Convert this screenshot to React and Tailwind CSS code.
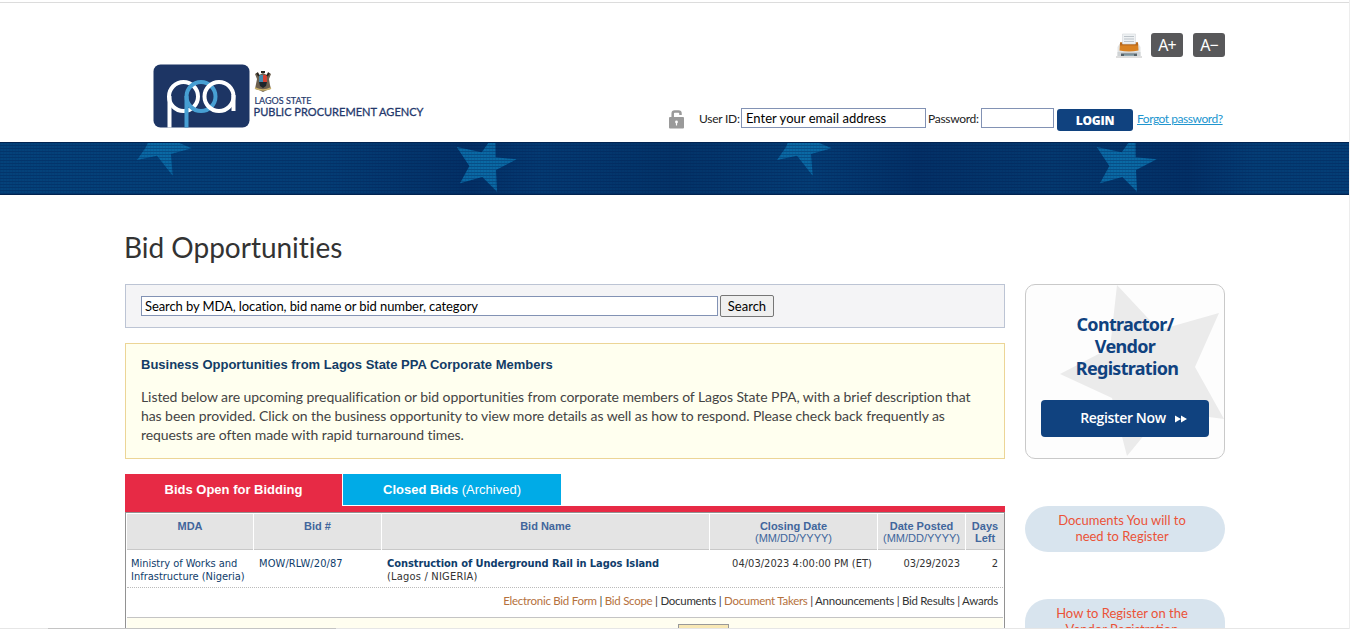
const LATO = "font-[Lato,'Noto_Sans',sans-serif]";

function Logo() {
  return (
    <svg className="block shrink-0 overflow-visible" width="275" height="66" viewBox="0 0 275 66">
      <defs>
        <clipPath id="tile"><rect x="0.5" y="0.5" width="96" height="63" rx="7" /></clipPath>
      </defs>
      <rect x="0.5" y="0.5" width="96" height="63" rx="7" fill="#1d3564" />
      <g clipPath="url(#tile)" fill="none" strokeWidth="4">
        <path d="M16.500 66V32" stroke="#fff" />
        <circle cx="30.500" cy="32.500" r="14.500" stroke="#fff" />
        <path d="M33.500 66V32" stroke="#479fd3" />
        <circle cx="48" cy="32.500" r="14.500" stroke="#479fd3" />
        <circle cx="66" cy="32.500" r="14.500" stroke="#fff" />
        <path d="M80.500 31V47" stroke="#fff" />
      </g>
      <g>
        <path d="M102 10l3-2 1 3 4-2 4 2 1-3 3 2-2 5 1 6 1 4-4 1-4 2-4-2-4-1 1-5 1-5z" fill="#6d604f" />
        <path d="M106 11h4v8h-4z" fill="#4689ae" />
        <path d="M110 11h4v8h-4z" fill="#d44233" />
        <path d="M106 18h8l-1 4-3 2-3-2z" fill="#1e252b" />
        <path d="M102 24q8 4 16 0" stroke="#cdb36b" strokeWidth="1.5" fill="none" />
        <path d="M104 9l2 3M116 9l-2 3M108 8h4" stroke="#28251f" strokeWidth="2" />
      </g>
      <text x="101.500" y="39.500" fill="#24386c" stroke="#24386c" strokeWidth="0.2" fontFamily="Lato, sans-serif" fontSize="9.500" textLength="57" lengthAdjust="spacingAndGlyphs">LAGOS STATE</text>
      <text x="100.500" y="52" fill="#24386c" stroke="#24386c" strokeWidth="0.3" fontFamily="Lato, sans-serif" fontSize="11.500" textLength="170" lengthAdjust="spacingAndGlyphs">PUBLIC PROCUREMENT AGENCY</text>
    </svg>
  );
}

function Printer() {
  return (
    <svg className="block" width="26" height="25" viewBox="0 0 26 25">
      <path d="M0 23.500h26v1H0z" fill="#bdbdbd" />
      <path d="M3.500 11h19l2 3v9h-23v-9z" fill="#e3e5e6" />
      <path d="M1.500 19h23v4h-23z" fill="#cfd3d5" />
      <path d="M4 9.500h18l.5 8q-9.500 2-19 0z" fill="#d98222" />
      <path d="M4 9.500h18v3H4z" fill="#b9691b" />
      <path d="M6.500 1h13v10h-13z" fill="#eef1f3" stroke="#d5d9dc" strokeWidth=".6" />
      <path d="M8 3.500h10M8 6h10M8 8.500h10" stroke="#bcc3c9" strokeWidth="1" />
      <path d="M5 20.500h16v2.500H5z" fill="#56636a" />
      <path d="M8 21.300h10v1.700H8z" fill="#8fa6b0" />
    </svg>
  );
}

function Lock() {
  return (
    <svg className="block" width="15" height="19" viewBox="0 0 15 19">
      <path d="M3.700 8V3.500Q3.700 1.500 5.700 1.500H9.500Q11.500 1.500 11.500 3.500V5" fill="none" stroke="#9a9a9a" strokeWidth="2.500" />
      <rect x="0" y="7" width="15" height="11.500" rx="1" fill="#9a9a9a" />
      <circle cx="7.500" cy="12" r="1.400" fill="#fff" />
      <path d="M6.900 12.500h1.200v3H6.900z" fill="#fff" />
    </svg>
  );
}

function Stars({ x }) {
  return (
    <g transform={`translate(${x} 0)`} fill="#0a69a4">
      <path d="M148 0L146 5 137 18 157 13.700 172.700 33.700 171 12 191.700 6.300 177 0z" />
      <path d="M456.700 5L481.700 10.300 489 0H495.500L495.700 15.300 516.700 17.300 496 28 497 49.700 482.300 35 460 41.300 469.300 24z" />
    </g>
  );
}

function Banner() {
  return (
    <svg className="block" width="1349" height="53" viewBox="0 0 1349 53">
      <defs>
        <linearGradient id="sea">
          <stop offset="0" stopColor="#04427a" />
          <stop offset=".24" stopColor="#043d75" />
          <stop offset=".35" stopColor="#033066" />
          <stop offset=".4" stopColor="#043a72" />
          <stop offset=".5" stopColor="#033368" />
          <stop offset=".6" stopColor="#043d75" />
          <stop offset=".68" stopColor="#033066" />
          <stop offset=".78" stopColor="#04396f" />
          <stop offset=".88" stopColor="#033066" />
          <stop offset=".93" stopColor="#043d75" />
          <stop offset="1" stopColor="#043e76" />
        </linearGradient>
        <pattern id="weave" width="3" height="3" patternUnits="userSpaceOnUse">
          <rect width="3" height="1" fill="#001c50" fillOpacity=".35" />
          <rect y="1" width="1" height="2" fill="#001c50" fillOpacity=".1" />
        </pattern>
      </defs>
      <rect width="1349" height="53" fill="url(#sea)" />
      <Stars x={0} />
      <Stars x={640} />
      <rect width="1349" height="53" fill="url(#weave)" />
      <path d="M0 .5H1349M0 52.500H1349" stroke="#012350" />
    </svg>
  );
}

function Header() {
  return (
    <header className="flex h-[142px] border-t border-white">
      <div className="pl-[153px] pt-[63px]"><Logo /></div>
      <div className="ml-auto flex w-[680px] flex-col pr-[124px]">
        <div className="mt-8 flex h-6 justify-end">
          <div className="mr-[9px]"><Printer /></div>
          <div className="mr-2.5 flex h-6 w-8 items-center justify-center rounded-[3px] bg-[#58585a] font-['Noto_Sans',sans-serif] text-base tracking-[-1px] text-white">A+</div>
          <div className="flex h-6 w-8 items-center justify-center rounded-[3px] bg-[#58585a] font-['Noto_Sans',sans-serif] text-base tracking-[-1px] text-white">A−</div>
        </div>
        <div className="mt-[50px] flex items-start whitespace-nowrap text-xs text-[#222]">
          <div className="mt-[3px] w-[30px] shrink-0"><Lock /></div>
          <div className="mt-1 w-[42px] shrink-0 tracking-[-0.25px]">User ID:</div>
          <div className="mt-px h-5 w-[185px] shrink-0 border border-[#8292b4] bg-white pl-1 text-[13px] leading-[19px] text-black"><span className="tracking-[0.03px]">Enter your email address</span></div>
          <div className="ml-[2px] mt-1 w-[53px] shrink-0 tracking-[-0.3px]">Password:</div>
          <div className="mt-px h-5 w-[73px] shrink-0 border border-[#8292b4] bg-white" />
          <div className="ml-[3px] mt-0.5 h-[22px] w-[76px] shrink-0 rounded-[3px] bg-[#10427f] text-center font-['Open_Sans',sans-serif] text-xs font-extrabold leading-[23px] tracking-[-0.2px] text-white">LOGIN</div>
          <a className="ml-1 mt-1 tracking-[-0.46px] text-[#2196cf] underline">Forgot password?</a>
        </div>
      </div>
    </header>
  );
}

function Th({ children, className = "" }) {
  return <div className={`border-b border-[#c8c8c8] bg-[#e4e4e4] pt-1.5 text-center font-['Liberation_Sans',sans-serif] text-[11px] leading-3 text-[#41669c] ${className}`}>{children}</div>;
}

const COLS = "grid grid-cols-[126px_127px_327px_167px_87px_38px] gap-x-px";

function BidTable() {
  return (
    <div className="h-[117px] overflow-hidden border-x border-t border-[#929292] px-px pt-px">
      <div className={`${COLS} h-9`}>
        <Th><b>MDA</b></Th>
        <Th><b>Bid #</b></Th>
        <Th><b>Bid Name</b></Th>
        <Th><b>Closing Date</b><br />(MM/DD/YYYY)</Th>
        <Th><b>Date Posted</b><br />(MM/DD/YYYY)</Th>
        <Th><b>Days<br />Left</b></Th>
      </div>
      <div className={`${COLS} h-[38px] whitespace-nowrap border-b border-dotted border-[#bbb] pt-[7px] font-['DejaVu_Sans_Condensed','DejaVu_Sans',sans-serif] text-[11px] leading-[13px] text-[#333]`}>
        <div className="pl-1 text-[#0f3d6b]"><span className="tracking-[-0.03px]">Ministry of Works and</span><br /><span className="tracking-[-0.01px]">Infrastructure (Nigeria)</span></div>
        <div className="pl-[5px] tracking-[0.1px] text-[#0f3d6b]">MOW/RLW/20/87</div>
        <div className="pl-[5px]"><b className="tracking-[-0.06px] text-[#0f3d6b]">Construction of Underground Rail in Lagos Island</b><br /><span className="tracking-[0.2px]">(Lagos / NIGERIA)</span></div>
        <div className="pr-[5px] text-right tracking-[0.03px]">04/03/2023 4:00:00 PM (ET)</div>
        <div className="pr-[5px] text-right tracking-[-0.05px]">03/29/2023</div>
        <div className="pr-[6px] text-right">2</div>
      </div>
      <div className={`flex h-[30px] items-center justify-end whitespace-pre border-b border-[#c4c4c4] pb-1 pr-[5px] ${LATO} text-[11.5px] tracking-[-0.27px] text-[#333]`}>
        <span className="text-[#b5713d]">Electronic Bid Form</span>{" | "}<span className="text-[#b5713d]">Bid Scope</span>{" | Documents | "}<span className="text-[#b5713d]">Document Takers</span>{" | Announcements | Bid Results | Awards"}
      </div>
      <div className="h-4 bg-[#fffef0] pl-[551px] pt-1.5">
        <div className="h-4 w-[51px] border border-[#999] bg-[#f8e8b5]" />
      </div>
    </div>
  );
}

function Bids() {
  return (
    <main className="w-[880px] shrink-0">
      <div className="flex h-11 border border-[#bcc4d4] bg-[#f4f4f6] pl-[15px] pt-[10px] text-[13px] text-black">
        <div className="mt-px h-5 w-[577px] border border-[#8292b4] bg-white pl-[3px] leading-[19px]"><span className="tracking-[-0.09px]">Search by MDA, location, bid name or bid number, category</span></div>
        <div className="ml-0.5 h-[22px] w-[54px] rounded-[2px] border border-[#767676] bg-[#efefef] text-center leading-[21px]">Search</div>
      </div>
      <section className="mt-[15px] h-[116px] whitespace-nowrap border border-[#ecd596] bg-[#ffffef] pl-[15px] pt-[13px]">
        <h2 className="font-['Liberation_Sans',sans-serif] text-[13px] font-bold leading-4 text-[#123c66]">Business Opportunities from Lagos State PPA Corporate Members</h2>
        <p className="mt-[14px] text-sm leading-[19px] tracking-[-0.075px] text-[#444]">Listed below are upcoming prequalification or bid opportunities from corporate members of Lagos State PPA, with a brief description that<br />has been provided. Click on the business opportunity to view more details as well as how to respond. Please check back frequently as<br />requests are often made with rapid turnaround times.</p>
      </section>
      <div className="mt-[15px] flex font-['Liberation_Sans',sans-serif] text-[13px] leading-8 text-white">
        <div className="h-8 w-[217px] bg-[#e72a45] text-center font-bold">Bids Open for Bidding</div>
        <div className="ml-px h-[31px] w-[218px] bg-[#00abe7] text-center"><b>Closed Bids</b> (Archived)</div>
      </div>
      <div className="h-1.5 bg-[#e72a45]" />
      <BidTable />
    </main>
  );
}

function Pill({ children, className }) {
  return <div className={`w-[200px] rounded-[23px] bg-[#d8e4ee] pt-1.5 text-center text-[13px] leading-4 text-[#eb5338] ${className}`}>{children}</div>;
}

function Sidebar() {
  return (
    <aside className="ml-5 w-[200px] shrink-0">
      <div className="relative h-[175px] overflow-hidden rounded-[10px] border border-[#c9c9c9] bg-[#fdfdfd] px-[15px] pt-7">
        <svg className="absolute left-0 top-0" width="198" height="173" viewBox="0 0 198 173">
          <path d="M91 0L133 45 193 28 169 82 198 134 138 126 101 171 86 113 34 89 84 63z" fill="#ebebeb" />
        </svg>
        <div className="relative text-center font-['Noto_Sans',sans-serif] text-lg font-bold leading-[22px] tracking-[-0.7px] text-[#10427f]">Contractor/<br />Vendor<br /><span className="ml-1">Registration</span></div>
        <div className="relative mt-[21px] flex h-[37px] items-center justify-center rounded-[4px] bg-[#10427f] pb-0.5 pl-[17px] font-['Open_Sans',sans-serif] text-sm font-semibold text-white">
          <span className="tracking-[-0.35px]">Register Now</span>
          <svg className="ml-[9px] mt-0.5" width="12" height="8" viewBox="0 0 12 8"><path d="M0 .5L6 4 0 7.500zM6 .5L12 4 6 7.500z" fill="#fff" /></svg>
        </div>
      </div>
      <Pill className="mt-[47px] h-[46px] pr-[6px]">Documents You will to<br />need to Register</Pill>
      <Pill className="mt-[47px] h-[70px] pr-[6px]">How to Register on the<br />Vendor Registration</Pill>
    </aside>
  );
}

export default function App() {
  return (
    <div className={`relative h-[629px] w-[1350px] overflow-hidden border-r border-[#ededed] bg-white ${LATO}`}>
      <div className="absolute left-0 top-[2px] h-px w-full bg-[#dcdcdc]" />
      <Header />
      <Banner />
      <div className="px-[125px]">
        <h1 className="-ml-px h-[89px] pt-[33px] text-[28px] leading-[38px] tracking-[-0.01px] text-[#333]">Bid Opportunities</h1>
        <div className="flex w-[1100px]">
          <Bids />
          <Sidebar />
        </div>
      </div>
      <div className="absolute bottom-0 left-0 flex h-px w-full bg-[#e6e6e6]"><div className="ml-12 w-[288px] bg-[#c4c4c4]" /></div>
    </div>
  );
}
